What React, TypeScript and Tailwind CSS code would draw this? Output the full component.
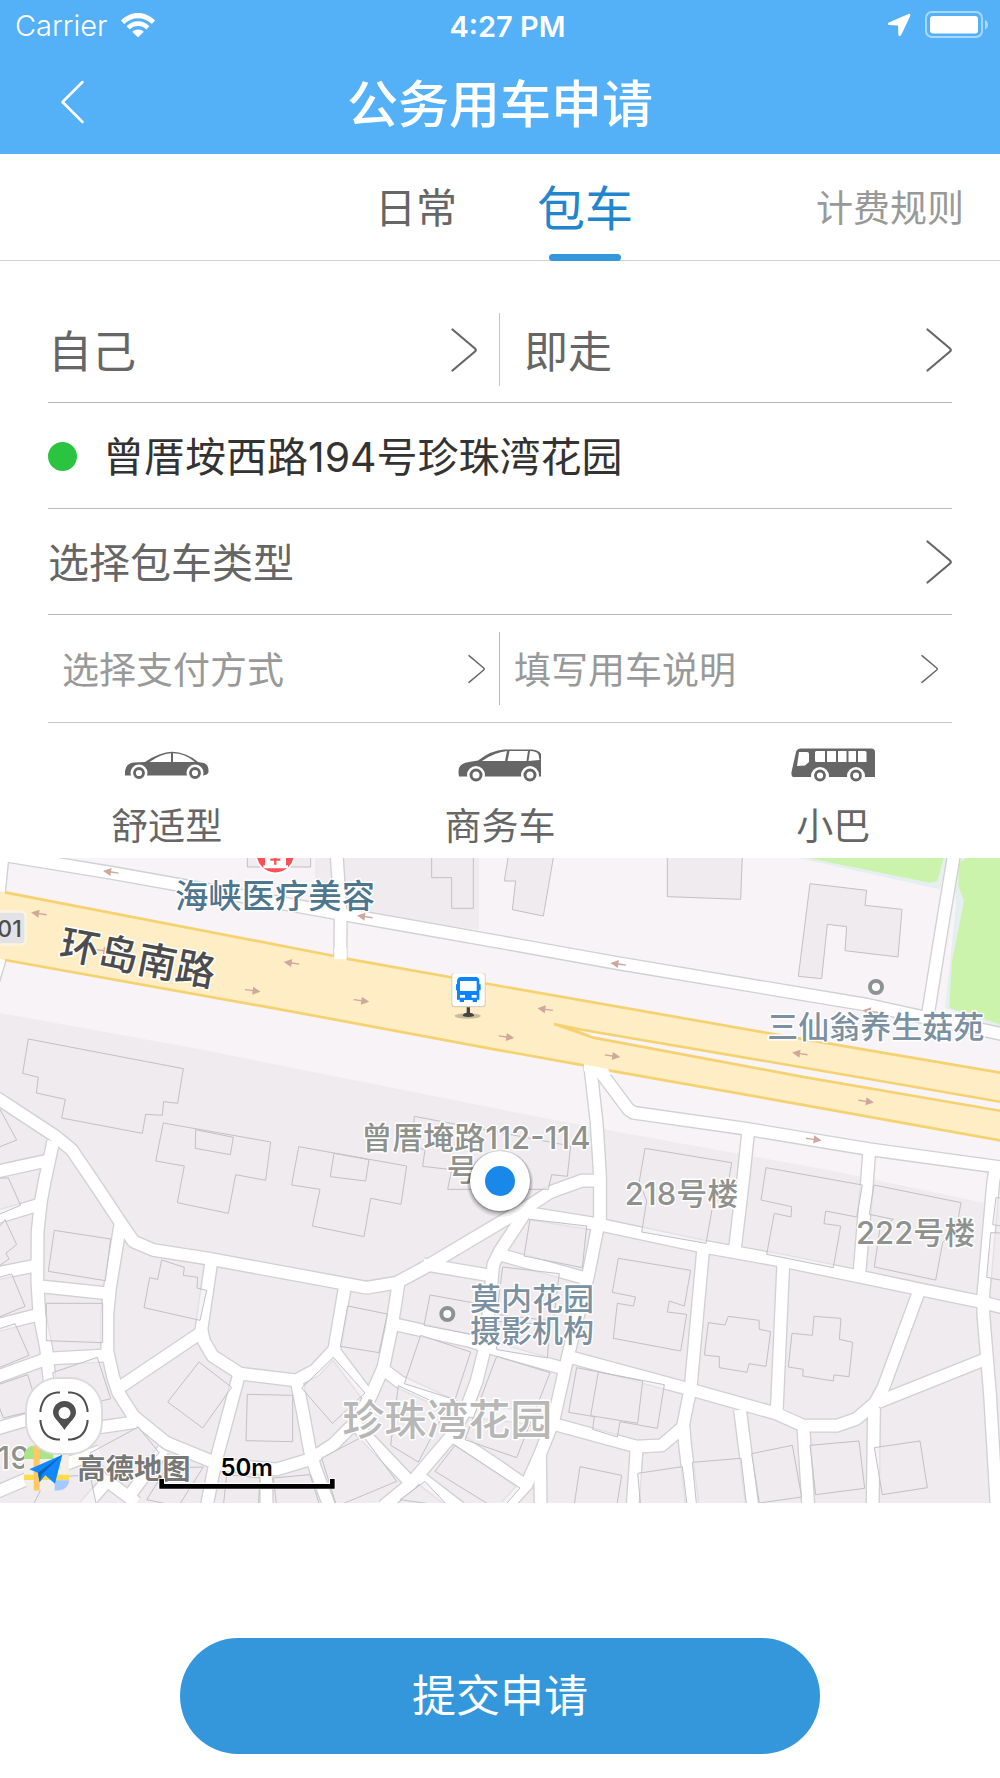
import React, { useState } from 'react';

// Map geometry, drawn on a 3000 x 1935 grid
const sideRoads = [
  '-10,-12 333,44 1020,167 1200,199 1500,252 1855,316 2600,440 2800,484 3010,529',
  '8,-10 -4,110',
  '0,300 -24,380',
  '1010,-10 1022,174 1021,300',
  '2862,-10 2820,244 2783,474',
  '-10,719 165,834 215,875 285,978 362,1094 400,1150 460,1176 620,1201 1100,1289 1190,1274 1270,1231 1500,1094 1590,1042 1650,1003 1745,968 1800,968',
  '160,850 135,965 123,1029 113,1119 112,1269 118,1369 138,1469 148,1559 150,1620',
  '-10,941 145,907',
  '-10,1078 118,1040',
  '-10,1246 112,1222',
  '-10,1402 118,1369',
  '-10,1557 140,1502 322,1492',
  '-10,1712 100,1680 250,1715 408,1692',
  '112,1284 330,1307',
  '362,1094 330,1289 322,1369 322,1479 340,1559 355,1604 400,1674 500,1755 640,1812',
  '350,1594 603,1424 635,1204',
  '603,1409 612,1450 638,1494 720,1547 888,1567 945,1537 1003,1474 1035,1284',
  '717,1550 645,1819 620,1945',
  '890,1569 910,1669 930,1779 945,1829 988,1945',
  '1195,1279 1175,1409 1150,1529 1110,1619 1060,1699 1000,1759 930,1804 830,1834 645,1819',
  '798,1840 800,1945',
  '1003,1480 1105,1615',
  '1150,1534 1200,1572 1380,1655 1560,1675 1665,1699 1910,1766 1985,1762 2046,1710',
  '1185,1399 1410,1449 1500,1478 1690,1531',
  '1270,1219 1480,1254',
  '1590,1042 1500,1179 1480,1219 1475,1269 1455,1469 1430,1569 1400,1649 1350,1739 1230,1879 1150,1945',
  '1500,1190 1760,1262',
  '1070,1704 1230,1872',
  '1250,1850 1380,1950',
  '1365,1739 1500,1829 1580,1885',
  '1590,1066 1795,1099 2100,1164 2350,1209 2570,1254 2760,1294 2940,1331 3010,1349',
  '1770,618 1790,794 1800,954 1800,1100',
  '1795,1099 1765,1249 1705,1489 1660,1689 1620,1789 1580,1879 1520,1945',
  '1790,626 1885,754 1900,764 2230,811 2610,874 3010,929',
  '2245,818 2230,960 2205,1170',
  '2608,878 2600,984 2578,1249',
  '2987,930 2980,969 2950,1309 2950,1369 2970,1609 2990,1945',
  '2110,1169 2090,1389 2072,1589 2050,1699 2055,1759 2077,1945',
  '1910,1769 1898,1945',
  '2350,1214 2330,1665',
  '1705,1496 2070,1594 2330,1667 2410,1703 2510,1703 2570,1682 2625,1635 2650,1589 2757,1300',
  '2220,1655 2257,1945',
  '2410,1706 2425,1945',
  '2622,1650 2618,1945',
  '2635,1632 2955,1504',
  '1620,1789 1622,1945',
  '-10,1902 100,1855 300,1780',
  '250,1790 330,1875 410,1935',
  '490,1775 380,1925',
  '330,1860 255,1945',
];

const northBuildings = [
  '742,-6 742,27 932,27 932,-6',
  '1295,-6 1295,59 1355,59 1355,151 1420,151 1420,-6',
  '1525,-6 1513,69 1547,69 1537,155 1630,174 1661,-6',
  '2002,-6 2002,116 2222,124 2227,-6',
  '2430,77 2600,97 2595,142 2706,154 2694,297 2535,278 2540,206 2482,199 2465,362 2395,355',
];

const buildings = [
  '85,543 550,632 533,736 491,731 487,772 437,769 427,826 185,780 196,724 109,705 115,658 68,646',
  '490,795 812,852 797,967 707,950 685,1066 532,1034 553,924 467,909',
  '587,815 586,871 691,890 700,838',
  '896,866 1220,924 1203,1039 1112,1021 1092,1136 937,1104 960,994 875,981',
  '1002,886 991,956 1097,969 1107,905',
  '1243,775 1712,864 1702,955 1655,950 1645,994 1343,994 1355,935 1268,925 1275,875 1235,865',
  '-5,745 50,846 -5,868',
  '-5,960 25,960 62,1042 -5,1070',
  '-5,1110 15,1085 50,1160 18,1185 27,1203 -5,1225',
  '-5,1258 35,1248 75,1345 -5,1378',
  '-5,1413 45,1397 87,1492 -5,1530',
  '-5,1580 83,1550 115,1655 10,1680 -5,1640',
  '163,1117 332,1143 316,1268 145,1240',
  '139,1336 308,1336 308,1454 139,1448',
  '485,1206 553,1228 550,1252 593,1258 591,1290 620,1297 600,1387 432,1349 449,1259 473,1264',
  '158,1544 292,1498 332,1622 180,1660',
  '597,1512 695,1588 608,1710 503,1632',
  '742,1609 878,1612 878,1751 738,1748',
  '1043,1344 1162,1368 1137,1484 1021,1465',
  '905,1590 1000,1498 1095,1605 997,1696',
  '1290,1311 1440,1338 1420,1430 1272,1402',
  '1262,1432 1412,1482 1365,1625 1213,1577',
  '1195,1583 1340,1650 1255,1812 1172,1762',
  '270,1785 415,1707 478,1785 400,1860 320,1850',
  '965,1800 1090,1735 1190,1870 1010,1945',
  '1305,1840 1365,1762 1560,1890 1500,1960',
  '1200,1925 1275,1870 1345,1945',
  '440,1925 500,1830 610,1827 535,1945',
  '100,1940 140,1860 270,1850 290,1945',
  '670,1945 680,1850 780,1860 775,1945',
  '830,1945 820,1860 930,1850 960,1945',
  '1590,1084 1760,1104 1747,1229 1572,1194',
  '1508,1227 1678,1247 1660,1389 1490,1369',
  '1490,1390 1650,1400 1642,1500 1490,1475',
  '1490,1495 1650,1544 1550,1799 1395,1745',
  '1855,1201 2072,1237 2053,1344 2008,1329 2002,1362 2060,1369 2042,1479 1840,1441 1852,1336 1900,1344 1907,1317 1837,1303',
  '1935,871 2195,914 2185,975 2137,1050 2118,1156 1925,1122 1940,1029 1918,969',
  '2298,929 2587,981 2570,1077 2477,1059 2472,1097 2522,1104 2500,1229 2300,1189 2323,1066 2373,1077 2375,1046 2283,1026',
  '2622,981 2883,1034 2875,1079 2840,1140 2828,1154 2807,1266 2623,1227 2640,1110 2680,1084 2608,1069',
  '2125,1394 2175,1401 2185,1375 2277,1387 2278,1414 2312,1421 2298,1525 2247,1517 2241,1543 2158,1529 2158,1496 2113,1491',
  '2442,1375 2523,1381 2518,1444 2558,1453 2547,1556 2502,1551 2500,1569 2408,1554 2410,1534 2365,1527 2376,1426 2437,1432',
  '1730,1529 1993,1580 1972,1711 1860,1691 1852,1737 1778,1714 1783,1676 1706,1663',
  '1795,1542 1772,1673 1913,1696 1928,1569',
  '1740,1826 1865,1852 1850,1945 1722,1945',
  '1913,1846 2047,1826 2062,1945 1922,1945',
  '2077,1813 2223,1801 2240,1945 2090,1945',
  '2255,1787 2377,1762 2405,1917 2278,1935',
  '2430,1762 2577,1749 2594,1891 2447,1910',
  '2623,1769 2760,1749 2782,1889 2647,1910',
  '3010,1020 2988,1019 2978,1100 3010,1105',
  '3010,1125 2972,1124 2960,1258 3010,1268',
];

// x, y, rotation in degrees
const arrows = [
  [333, 42, 188], [117, 167, 188], [1095, 176, 188], [875, 315, 188],
  [1855, 318, 188], [1636, 454, 188], [2400, 587, 188], [2612, 460, 188],
  [758, 398, 8], [1084, 428, 8], [1837, 594, 8], [2598, 730, 8],
  [2441, 844, 8], [1519, 537, 8], [310, 278, 8],
];

type PlaceLabel = { text: string; x: number; y: number; size: string; color: string };

const places: PlaceLabel[] = [
  { text: '海峡医疗美容', x: 525, y: 150, size: 'text-[100px]', color: 'fill-[#4f768f]' },
  { text: '三仙翁养生菇苑', x: 2302, y: 539, size: 'text-[93px]', color: 'fill-[#7b90a0]' },
  { text: '曾厝埯路112-114', x: 1084, y: 872, size: 'text-[93px]', color: 'fill-[#8f918d]' },
  { text: '号', x: 1340, y: 968, size: 'text-[93px]', color: 'fill-[#8f918d]' },
  { text: '218号楼', x: 1874, y: 1041, size: 'text-[93px]', color: 'fill-[#8f918d]' },
  { text: '222号楼', x: 2568, y: 1159, size: 'text-[93px]', color: 'fill-[#8f918d]' },
  { text: '莫内花园', x: 1410, y: 1357, size: 'text-[93px]', color: 'fill-[#7b90a0]' },
  { text: '摄影机构', x: 1410, y: 1453, size: 'text-[93px]', color: 'fill-[#7b90a0]' },
  { text: '珍珠湾花园', x: 1027, y: 1730, size: 'text-[126px]', color: 'fill-[#b7b7b7]' },
  { text: '19', x: -8, y: 1834, size: 'text-[93px]', color: 'fill-[#8f918d]' },
];

const ChevronRight = ({ small = false }: { small?: boolean }) => {
  return <svg viewBox="0 0 26 44" className={small ? 'h-[30px] w-[17px] shrink-0' : 'h-11 w-[26px] shrink-0'} fill="none" stroke="#666" strokeWidth="2.2" strokeLinecap="round" strokeLinejoin="round" aria-hidden="true">
      <path d="M1.5 1.5 24 20.5Q25.5 22 24 23.5L1.5 42.5" />
    </svg>;
};

const StatusBar = () => {
  return <div className="grid h-[50px] grid-cols-[1fr_auto_1fr] items-center pl-[15px] text-[29px] leading-none">
      <div className="flex items-center gap-3.5">
        <span className="font-light">Carrier</span>
        <svg viewBox="0 0 34 24" className="h-6 w-[34px]" fill="#fff" aria-hidden="true">
          <path d="M0 7.6C9.6-2.5 24.4-2.5 34 7.6L30.8 11C22.9 3.4 11.1 3.4 3.2 11Z" />
          <path d="M5.6 13.2C12 6.7 22 6.7 28.4 13.2L25.2 16.4C20.5 12 13.5 12 8.8 16.4Z" />
          <path d="M11.2 18.8C14.5 15.6 19.5 15.6 22.8 18.8L17 24.500Z" />
        </svg>
      </div>
      <div className="pt-0.5 text-center font-semibold">4:27 PM</div>
      <div className="flex items-center justify-end gap-3.5 pr-[11px]">
        <svg viewBox="0 0 24 24" className="h-6 w-6" fill="#fff" aria-hidden="true">
          <path d="M21.5 1 1.8 9.6C.3 10.3.6 12.1 2.2 12.1L11 12.4 11.3 21.5C11.4 23.4 13.5 23.6 14.2 22L23.2 3C23.8 1.5 22.8.5 21.5 1Z" />
        </svg>
        <svg viewBox="0 0 64 28" className="h-7 w-16" aria-hidden="true">
          <rect x="1" y="1" width="56" height="25" rx="6" fill="none" stroke="#fff" strokeOpacity=".5" strokeWidth="2" />
          <rect x="5" y="5" width="48" height="17.5" rx="3" fill="#fff" />
          <path d="M60 9v9.5Q63 17 63 13.700T60 9Z" fill="#fff" fillOpacity=".5" />
        </svg>
      </div>
    </div>;
};

const CarIcon = () => {
  return <svg viewBox="0 2 84 36" className="h-9 w-[84px]" aria-hidden="true">
      <path d="M0 30.5V26Q1 18 9 17.5L20 17Q35 7 47 6.8 61 7 73 17L79 18Q84 20 83.5 27 83 30 78 30.5Z" fill="#666" />
      <path d="M24.5 17Q36 9 46 8.3V17ZM48 8.3Q60 8.5 70 17H48Z" fill="#fff" />
      <circle cx="14" cy="28" r="8.5" fill="#fff" /><circle cx="14" cy="28" r="4.5" fill="none" stroke="#666" strokeWidth="2.8" />
      <circle cx="70" cy="28" r="8.5" fill="#fff" /><circle cx="70" cy="28" r="4.5" fill="none" stroke="#666" strokeWidth="2.8" />
    </svg>;
};

const VanIcon = () => {
  return <svg viewBox="0 2 84 36" className="h-9 w-[84px]" aria-hidden="true">
      <path d="M1 31.5Q0 27 1 23 3 18 11 17L20 15.5Q34 5 46 4.5H74Q81 5 83 9V31.5Z" fill="#666" />
      <path d="M24 16Q36 7.5 49 6L47 16ZM51.5 6H70L68.5 16H49.5ZM72 6Q79 6 80.5 9.5L81.5 15 70.5 16Z" fill="#fff" />
      <circle cx="18" cy="30" r="9" fill="#fff" /><circle cx="18" cy="30" r="5" fill="none" stroke="#666" strokeWidth="3" />
      <circle cx="72" cy="30" r="9" fill="#fff" /><circle cx="72" cy="30" r="5" fill="none" stroke="#666" strokeWidth="3" />
    </svg>;
};

const BusIcon = () => {
  return <svg viewBox="0 1 84 36" className="h-9 w-[84px]" aria-hidden="true">
      <path d="M2 31Q0 30 .5 26L5 6Q6 2.5 10 2.5H80Q84 2.5 84 6V31Z" fill="#666" />
      <path d="M8 6H16Q18 6 18 8V16L14 19.5 6 20ZM25 5H34V16H25Q24 16 24 14V6ZM36 5H45V16H36ZM47 5H55.5V16H47ZM57.5 5H65V16H57.5ZM67 5H74Q75.5 5 75.5 6.5V16H67Z" fill="#fff" />
      <circle cx="29" cy="30" r="9" fill="#fff" /><circle cx="29" cy="29.5" r="4.5" fill="none" stroke="#666" strokeWidth="2.8" />
      <circle cx="65" cy="30" r="9" fill="#fff" /><circle cx="65" cy="29.5" r="4.5" fill="none" stroke="#666" strokeWidth="2.8" />
    </svg>;
};

const vehicles = [
  { name: '舒适型', icon: <CarIcon /> },
  { name: '商务车', icon: <VanIcon /> },
  { name: '小巴', icon: <BusIcon /> },
];

const MapView = () => {
  return <section className="relative" aria-label="地图">
      <svg viewBox="0 0 3000 1935" className="block h-auto w-full bg-[#f7f3f7]">
        <polygon points="-5,464 600,574 1500,754 1810,814 2500,939 2950,1034 3005,1044 3005,1940 -5,1940" fill="#efebee" />
        <polygon points="945,-5 945,155 1437,215 1437,-5" fill="#efebee" />
        <polygon points="2370,-5 2820,94 2842,-5" fill="#e5eff0" />
        <polygon points="2400,-5 2790,74 2812,69 2832,-5" fill="#ccf3ab" />
        <polygon points="2880,-5 2865,94 2868,144 2835,450 3005,510 3005,-5" fill="#e5eff0" />
        <polygon points="2905,-5 2877,15 2875,84 2892,129 2855,314 2848,450 3005,500 3005,-5" fill="#ccf3ab" />
        <g fill="none" strokeLinejoin="round">
          {sideRoads.map(points => <polyline key={points} points={points} stroke="#d1d0d2" strokeWidth="43" />)}
          {sideRoads.map(points => <polyline key={points} points={points} stroke="#fff" strokeWidth="35" />)}
        </g>
        <g fill="#efebee" stroke="#c2c1c6" strokeWidth="3">
          {northBuildings.map(points => <polygon key={points} points={points} />)}
          {buildings.map(points => <polygon key={points} points={points} fillOpacity=".6" />)}
        </g>

        <polygon points="-5,98 15,102 1003,294 1500,384 2400,542 3005,645 3005,848 2400,739 1750,624 1500,577 840,454 15,306 -5,302" fill="#ffeec5" />
        <g fill="none" stroke="#f6d170" strokeWidth="8">
          <polyline points="15,103 1003,294" />
          <polyline points="1039,302 1500,384 2400,542 3005,645" />
          <polyline points="15,306 840,454 1500,577 1752,622" />
          <polyline points="1826,637 2400,739 3005,848" />
          <polygon points="1662,498 1750,516 2400,627 3010,733 3010,760 2400,655 1780,539" fill="#f8f4f6" />
          <polygon points="1664,499 1720,512 1770,532" fill="#f6d170" strokeWidth="2" />
        </g>
        <path d="M1003 270V304H1040V270ZM1752 640V619L1822 633 1835 650Z" fill="#fff" />

        {arrows.map(([x, y, turn]) => <path key={`${x}-${y}`} d="M-23-2H0V-12L24 0 0 12V2H-23Z" transform={`translate(${x} ${y}) rotate(${turn})`} fill="#cfa79c" />)}

        <g fill="#fff" stroke="#8c9391" strokeWidth="12">
          <circle cx="2628" cy="387" r="18" />
          <circle cx="1342" cy="1368" r="18" />
        </g>

        <circle cx="826" cy="-12" r="58" fill="#fa5157" stroke="#fff" strokeWidth="5" />
        <path d="M795-10H858V22H864V31H790V22H795Z" fill="#fff" />
        <path d="M826-10V20M811 5H841" stroke="#fa5157" strokeWidth="7" />

        <rect x="-30" y="160" width="107" height="100" rx="14" fill="#e3e3e7" stroke="#fbf3dc" strokeWidth="8" />
        <text x="-8" y="237" className="fill-[#4c4c4c] font-['Inter','Noto_Sans_CJK_SC',sans-serif] text-[69px] font-medium">01</text>

        <g className="font-['Inter','Noto_Sans_CJK_SC',sans-serif] font-medium" stroke="#fff" strokeWidth="9" strokeLinejoin="round" paintOrder="stroke">
          {places.map(place => <text key={place.text} x={place.x} y={place.y} className={`${place.size} ${place.color}`}>{place.text}</text>)}
          <text x="0" y="43" textAnchor="middle" transform="translate(414 300) rotate(11)" className="fill-[#4c4c4c] text-[118px]">环岛南路</text>
        </g>

        {/* bus stop */}
        <ellipse cx="1403" cy="474" rx="39" ry="8" fill="#c9bc9c" />
        <path d="M1400 444H1410V464Q1423 467 1422 474 1405 480 1388 474 1388 467 1400 464Z" fill="#444" />
        <rect x="1354" y="345" width="103" height="103" rx="9" fill="#d9d0bb" />
        <rect x="1357" y="346" width="97" height="98" rx="8" fill="#fff" />
        <path d="M1381 357H1429Q1438 358 1438 370V379H1442V397H1438V425H1431V432H1418V426H1392V432H1379V425H1371V397H1368V379H1371V370Q1372 358 1381 357ZM1380 369V399H1430V369ZM1380 411V419H1395V411ZM1415 411V419H1430V411Z" fill="#0a84ff" fillRule="evenodd" />

        {/* current position */}
        <circle cx="1500" cy="976" r="100" fill="#000" fillOpacity=".08" />
        <circle cx="1500" cy="974" r="96" fill="#000" fillOpacity=".12" />
        <circle cx="1500" cy="972" r="92" fill="#000" fillOpacity=".22" />
        <circle cx="1500" cy="969" r="90" fill="#fff" />
        <circle cx="1500" cy="969" r="45" fill="#1a88e8" />

        {/* provider mark */}
        <clipPath id="mark"><rect x="72" y="1762" width="136" height="136" rx="34" /></clipPath>
        <g clipPath="url(#mark)">
          <rect x="72" y="1762" width="136" height="136" fill="#f1efe8" />
          <path d="M72 1762H160V1803H72Z" fill="#a9e586" />
          <path d="M164 1867H208V1898H164Z" fill="#a5c8fd" />
          <path d="M72 1850H208V1866H72Z" fill="#ffdc4f" />
          <path d="M101 1762H119V1898H101Z" fill="#ffc867" />
        </g>
        <path d="M187 1790 88 1834 114 1844 119 1873 136 1852 165 1877Z" fill="#1188ff" />
        <path d="M187 1790 114 1844 119 1873 126 1849Z" fill="#0b63bd" />
        <text x="232" y="1862" className="fill-[#777] font-['Noto_Sans_CJK_SC',sans-serif] text-[85px] font-bold" stroke="#fff" strokeWidth="6" paintOrder="stroke">高德地图</text>

        <text x="740" y="1854" textAnchor="middle" className="fill-black font-['Inter',sans-serif] text-[72px] font-semibold" stroke="#fff" strokeWidth="6" paintOrder="stroke">50m</text>
        <path d="M485 1861V1884H997V1861" fill="none" stroke="#fff" strokeWidth="20" />
        <path d="M485 1863V1885H997V1863" fill="none" stroke="#000" strokeWidth="14" />
      </svg>
      <button type="button" aria-label="定位" className="absolute bottom-12 left-[25px] flex size-[78px] items-center justify-center rounded-[33px] border-2 border-[#dcdadc] bg-white">
        <svg viewBox="0 0 50 50" className="size-[50px]" fill="none" stroke="#4f4f4f" strokeWidth="2" aria-hidden="true">
          <path d="M1.5 21V19Q4 3 18 1.5H21M29 1.5H32Q46 3 48.5 19V21M48.5 29V31Q46 47 32 48.5H29M21 48.5H18Q4 47 1.5 31V29" />
          <path d="M25.5 39C21 31.5 14 27 14 21.5A11.5 11.5 0 0 1 37 21.5C37 27 30 31.5 25.5 39ZM25.5 16A6 6 0 1 0 25.5 28 6 6 0 1 0 25.5 16Z" fill="#4f4f4f" fillRule="evenodd" stroke="none" />
        </svg>
      </button>
    </section>;
};

const App = () => {
  const [vehicle, setVehicle] = useState('');
  return <main className="min-h-screen bg-white font-['Inter','Noto_Sans_CJK_SC',sans-serif] text-[#666]">
      <header className="bg-[#54b1f8] text-white">
        <StatusBar />
        <div className="grid h-[104px] grid-cols-[1fr_auto_1fr] items-center px-[60px]">
          <button type="button" aria-label="返回" className="w-6">
            <svg viewBox="0 0 24 44" className="h-11 w-6" fill="none" stroke="#fff" strokeWidth="2.5" strokeLinecap="round" strokeLinejoin="round" aria-hidden="true">
              <path d="M22.5 2 2.5 22 22.5 42" />
            </svg>
          </button>
          <h1 className="pt-1 text-[51px] leading-none font-medium">公务用车申请</h1>
        </div>
      </header>

      <nav className="grid h-[107px] grid-cols-[1fr_auto_1fr] items-stretch border-b border-[#d0d0d6] pr-9 pl-11">
        <div className="col-start-2 flex gap-20">
          <button type="button" className="pt-1 text-[41px]">日常</button>
          <button type="button" className="relative pt-1 text-[48px] text-[#2385cb]">
            包车
            <span className="absolute inset-x-3 -bottom-px h-[7px] rounded-full bg-[#3597db]"></span>
          </button>
        </div>
        <a href="#rules" className="self-center justify-self-end pt-1 text-[37px] text-[#999]">计费规则</a>
      </nav>

      <div className="px-12 pt-9">
        <div className="grid h-[106px] grid-cols-2 items-center border-b border-[#b8b8b8] text-[44px]">
          <button type="button" className="flex h-[73px] items-center justify-between border-r border-[#c4c4c4] pr-[22px]">
            <span className="pt-1">自己</span>
            <ChevronRight />
          </button>
          <button type="button" className="flex h-[73px] items-center justify-between pl-6">
            <span className="pt-1">即走</span>
            <ChevronRight />
          </button>
        </div>
        <button type="button" className="flex h-[106px] w-full items-center gap-[26px] border-b border-[#b8b8b8] pt-0.5 text-[41px] text-[#333]">
          <span className="size-[29px] rounded-full bg-[#2bc441]"></span>
          <span className="pt-0.5">曾厝垵西路194号珍珠湾花园</span>
        </button>
        <button type="button" className="flex h-[106px] w-full items-center justify-between border-b border-[#b8b8b8] text-[41px]">
          <span className="pt-1">选择包车类型</span>
          <ChevronRight />
        </button>
        <div className="grid h-[108px] grid-cols-2 items-center border-b border-[#c8c8c8] text-[37px] text-[#999]">
          <button type="button" className="flex h-[73px] items-center justify-between border-r border-[#b8b8b8] px-3.5">
            <span className="pt-1">选择支付方式</span>
            <ChevronRight small />
          </button>
          <button type="button" className="flex h-[73px] items-center justify-between px-3.5">
            <span className="pt-1">填写用车说明</span>
            <ChevronRight small />
          </button>
        </div>
      </div>

      <div className="grid grid-cols-3 pt-6 pb-[3px]">
        {vehicles.map(({ name, icon }) => <button key={name} type="button" aria-pressed={vehicle === name} onClick={() => setVehicle(name)} className="flex flex-col items-center gap-4 text-[37px] leading-[56px]">
            {icon}
            {name}
          </button>)}
      </div>

      <MapView />

      <div className="px-6 pt-[135px] pb-6">
        <button type="button" className="mx-auto block h-[116px] w-full max-w-[640px] rounded-full bg-[#3597db] text-[44px] text-white">提交申请</button>
      </div>
    </main>;
};
export default App;
